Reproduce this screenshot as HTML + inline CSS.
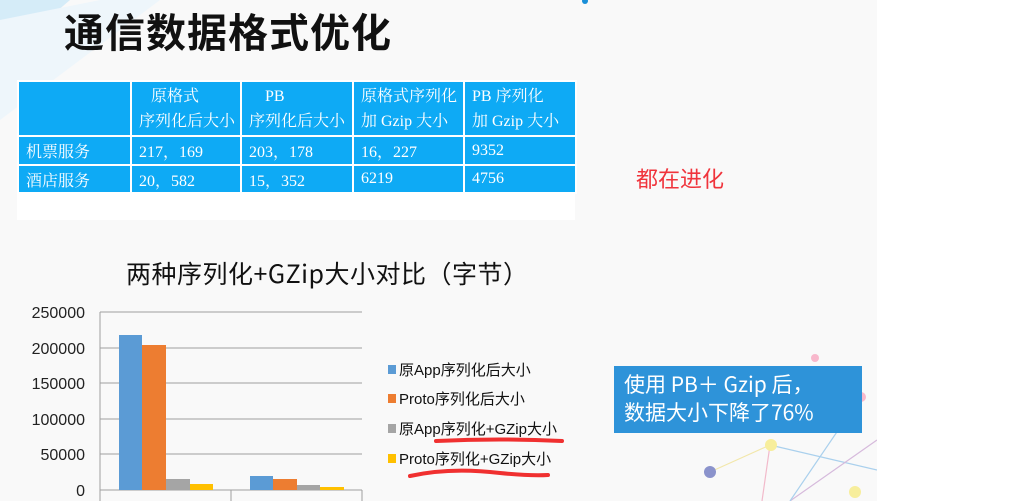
<!DOCTYPE html>
<html><head><meta charset="utf-8"><style>
body{margin:0;width:1029px;height:501px;overflow:hidden;background:#fff;position:relative;font-family:"Liberation Sans","Noto Sans CJK SC",sans-serif}
.slide{position:absolute;left:0;top:0;width:877px;height:501px;background:#f9f9f9;overflow:hidden}
.abs{position:absolute}
table{border-collapse:collapse;position:absolute;left:17px;top:80px;width:558px;table-layout:fixed;font-family:"Liberation Serif","Noto Serif CJK SC",serif;color:#fff;font-size:16px}
td{background:#0eaaf5;border:2px solid #fff;padding:0 0 0 7px;vertical-align:middle;white-space:nowrap;overflow:hidden}
</style></head><body>
<div class="slide">
<svg class="abs" style="left:0;top:0" width="877" height="501">
<polygon points="0,0 70,0 0,60" fill="#d5ecf8"/>
<polygon points="0,20 100,0 160,0 0,120" fill="#eef6fb"/>
<g stroke-width="1.2" opacity=".7">
<line x1="710" y1="472" x2="770" y2="445" stroke="#f0e08a"/>
<line x1="770" y1="445" x2="762" y2="501" stroke="#f0a0b8"/>
<line x1="770" y1="445" x2="877" y2="470" stroke="#8ac0e8"/>
<line x1="790" y1="501" x2="877" y2="440" stroke="#c8a0d0"/>
<line x1="860" y1="398" x2="790" y2="501" stroke="#8ac0e8"/>
</g>
<circle cx="771" cy="445" r="6" fill="#f7ee9c"/>
<circle cx="710" cy="472" r="6" fill="#8b93cc"/>
<circle cx="815" cy="358" r="4" fill="#f8b8cc"/>
<circle cx="855" cy="492" r="6" fill="#f7ee9c"/>
<circle cx="861" cy="397" r="5" fill="#f8b8cc"/>
<circle cx="585" cy="1" r="3" fill="#1a8fd8"/>
</svg>
<div class="abs" style="left:64px;top:1px;font-size:40px;font-weight:bold;color:#111;font-family:'Noto Sans CJK SC',sans-serif;letter-spacing:1px">通信数据格式优化</div>
<div class="abs" style="left:17px;top:192px;width:558px;height:28px;background:#fff"></div>
<table>
<colgroup><col style="width:113px"><col style="width:110px"><col style="width:112px"><col style="width:111px"><col style="width:112px"></colgroup>
<tr style="height:55px"><td></td><td style="line-height:25px">&nbsp;&nbsp;&nbsp;原格式<br>序列化后大小</td><td style="line-height:25px">&nbsp;&nbsp;&nbsp;&nbsp;PB<br>序列化后大小</td><td style="line-height:25px">原格式序列化<br>加 Gzip 大小</td><td style="line-height:25px">PB 序列化<br>加 Gzip 大小</td></tr>
<tr style="height:29px"><td>机票服务</td><td>217，169</td><td>203，178</td><td>16，227</td><td>9352</td></tr>
<tr style="height:28px"><td>酒店服务</td><td>20，582</td><td>15，352</td><td>6219</td><td>4756</td></tr>
</table>
<div class="abs" style="left:636px;top:162px;font-size:22px;color:#f0343c;font-family:'Noto Sans CJK SC',sans-serif">都在进化</div>
<div class="abs" style="left:126px;top:255px;font-size:25px;color:#111;font-family:'Noto Sans CJK SC',sans-serif;letter-spacing:0.5px">两种序列化+GZip大小对比（字节）</div>
<svg class="abs" style="left:0;top:295px" width="600" height="206" font-family="Liberation Sans" font-size="16" fill="#222">
<g stroke="#a0a0a0" stroke-width="1">
<line x1="100" y1="17" x2="362" y2="17"/><line x1="100" y1="53" x2="362" y2="53"/><line x1="100" y1="88" x2="362" y2="88"/><line x1="100" y1="124" x2="362" y2="124"/><line x1="100" y1="159" x2="362" y2="159"/><line x1="100" y1="195" x2="362" y2="195"/>
<line x1="100" y1="17" x2="100" y2="206"/><line x1="231" y1="195" x2="231" y2="206"/><line x1="362" y1="195" x2="362" y2="206"/>
</g>
<g text-anchor="end"><text x="85" y="23">250000</text><text x="85" y="59">200000</text><text x="85" y="94">150000</text><text x="85" y="130">100000</text><text x="85" y="165">50000</text><text x="85" y="201">0</text></g>
<rect x="119" y="40" width="23" height="155" fill="#5b9bd5"/><rect x="142" y="50" width="24" height="145" fill="#ed7d31"/><rect x="166" y="184" width="24" height="11" fill="#a5a5a5"/><rect x="190" y="189" width="23" height="6" fill="#ffc000"/>
<rect x="250" y="181" width="23" height="14" fill="#5b9bd5"/><rect x="273" y="184" width="24" height="11" fill="#ed7d31"/><rect x="297" y="190" width="23" height="5" fill="#a5a5a5"/><rect x="320" y="192" width="24" height="3" fill="#ffc000"/>
</svg>
<svg class="abs" style="left:380px;top:355px" width="200" height="130" font-family="Liberation Sans,Noto Sans CJK SC" font-size="15" fill="#111">
<rect x="8" y="10" width="8" height="9" fill="#5b9bd5"/><text x="19" y="20">原App序列化后大小</text>
<rect x="8" y="39" width="8" height="9" fill="#ed7d31"/><text x="19" y="49">Proto序列化后大小</text>
<rect x="8" y="69" width="8" height="9" fill="#a5a5a5"/><text x="19" y="79">原App序列化+GZip大小</text>
<rect x="8" y="99" width="8" height="9" fill="#ffc000"/><text x="19" y="109">Proto序列化+GZip大小</text>
<path d="M56 86 Q120 83 182 86" stroke="#f03030" stroke-width="4" fill="none" stroke-linecap="round"/>
<path d="M30 121 Q70 112 120 118 Q150 121 168 120" stroke="#f03030" stroke-width="4" fill="none" stroke-linecap="round"/>
</svg>
<div class="abs" style="left:614px;top:366px;width:248px;height:67px;background:#2e93d9;color:#fff;font-size:21px;line-height:28px;padding:4px 0 0 10px;box-sizing:border-box;font-family:'Noto Sans CJK SC',sans-serif;white-space:nowrap">使用 PB＋ Gzip 后，<br>数据大小下降了76%</div>
</div>
</body></html>
